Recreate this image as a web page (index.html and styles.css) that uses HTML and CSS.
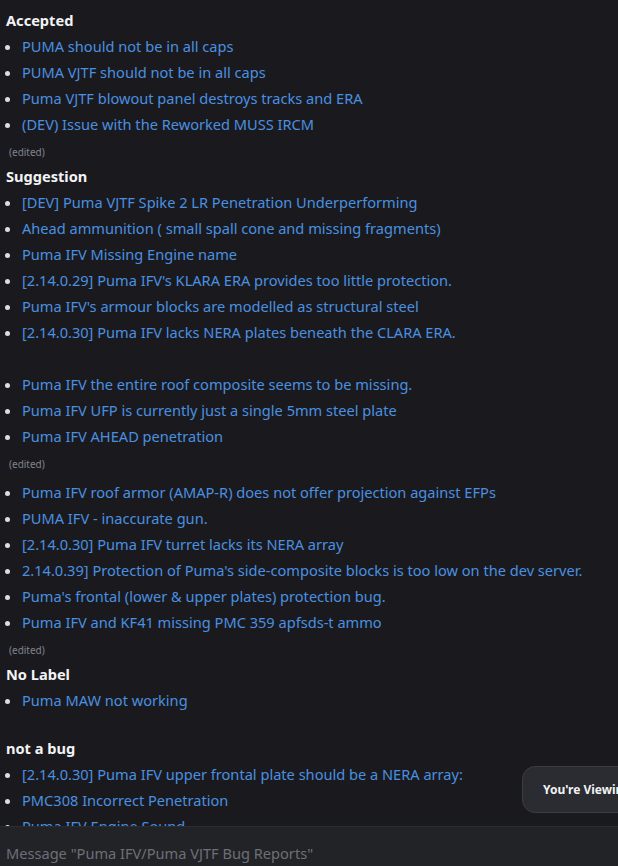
FILE: index.html
```html
<!DOCTYPE html>
<html lang="en">
<head>
    <meta charset="UTF-8">
    <meta name="viewport" content="width=device-width, initial-scale=1.0">
    <title>Puma IFV/Puma VJTF Bug Reports</title>
    <link rel="stylesheet" href="styles.css">
</head>
<body>
    <div class="chat">
        <div class="messages">
            <div class="label">Accepted</div>
            <ul class="reports">
                <li><a href="#">PUMA should not be in all caps</a></li>
                <li><a href="#">PUMA VJTF should not be in all caps</a></li>
                <li><a href="#">Puma VJTF blowout panel destroys tracks and ERA</a></li>
                <li><a href="#">(DEV) Issue with the Reworked MUSS IRCM</a></li>
            </ul>
            <div class="edited">(edited)</div>

            <div class="label">Suggestion</div>
            <ul class="reports">
                <li><a href="#">[DEV] Puma VJTF Spike 2 LR Penetration Underperforming</a></li>
                <li><a href="#">Ahead ammunition ( small spall cone and missing fragments)</a></li>
                <li><a href="#">Puma IFV Missing Engine name</a></li>
                <li><a href="#">[2.14.0.29] Puma IFV's KLARA ERA provides too little protection.</a></li>
                <li><a href="#">Puma IFV's armour blocks are modelled as structural steel</a></li>
                <li><a href="#">[2.14.0.30] Puma IFV lacks NERA plates beneath the CLARA ERA.</a></li>
            </ul>
            <div class="blank"></div>
            <ul class="reports">
                <li><a href="#">Puma IFV the entire roof composite seems to be missing.</a></li>
                <li><a href="#">Puma IFV UFP is currently just a single 5mm steel plate</a></li>
                <li><a href="#">Puma IFV AHEAD penetration</a></li>
            </ul>
            <div class="edited">(edited)</div>
            <ul class="reports after-edit">
                <li><a href="#">Puma IFV roof armor (AMAP-R) does not offer projection against EFPs</a></li>
                <li><a href="#">PUMA IFV - inaccurate gun.</a></li>
                <li><a href="#">[2.14.0.30] Puma IFV turret lacks its NERA array</a></li>
                <li><a href="#">2.14.0.39] Protection of Puma's side-composite blocks is too low on the dev server.</a></li>
                <li><a href="#">Puma's frontal (lower &amp; upper plates) protection bug.</a></li>
                <li><a href="#">Puma IFV and KF41 missing PMC 359 apfsds-t ammo</a></li>
            </ul>
            <div class="edited">(edited)</div>

            <div class="label">No Label</div>
            <ul class="reports">
                <li><a href="#">Puma MAW not working</a></li>
            </ul>
            <div class="blank short"></div>

            <div class="label">not a bug</div>
            <ul class="reports">
                <li><a href="#">[2.14.0.30] Puma IFV upper frontal plate should be a NERA array:</a></li>
                <li><a href="#">PMC308 Incorrect Penetration</a></li>
                <li><a href="#">Puma IFV Engine Sound</a></li>
            </ul>
        </div>

        <div class="toast">You're Viewing Older Messages</div>

        <div class="composer">Message "Puma IFV/Puma VJTF Bug Reports"</div>
    </div>
</body>
</html>
```

FILE: styles.css
```css
body {
    margin: 0;
    background-color: #1a1a1e;
    font-family: "Noto Sans", sans-serif;
    font-size: 14.6px;
    color: #dbdee1;
    overflow: hidden;
}
.chat {
    position: relative;
    height: 100vh;
    display: flex;
    flex-direction: column;
}
.messages {
    flex: 1;
    overflow: hidden;
    padding: 7px 0 0 6px;
}
.label {
    height: 26px;
    line-height: 26px;
    font-weight: bold;
    color: #f2f3f5;
}
.reports {
    margin: 0;
    padding-left: 16px;
    list-style: disc;
    color: #dbdee1;
}
.reports.after-edit {
    margin-top: 4px;
}
.reports li {
    height: 26px;
    line-height: 26px;
}
.reports a {
    color: #4a90e0;
    text-decoration: none;
}
.edited {
    height: 26px;
    line-height: 30px;
    font-size: 10px;
    color: #80848e;
    padding-left: 3px;
}
.blank {
    height: 26px;
}
.blank.short {
    height: 22px;
}
.toast {
    position: absolute;
    left: 522px;
    top: 766px;
    height: 45px;
    line-height: 45px;
    padding: 0 20px;
    white-space: nowrap;
    background-color: #2b2c31;
    border: 1px solid #3b3c42;
    border-radius: 13px;
    font-size: 12px;
    font-weight: bold;
    color: #f2f3f5;
}
.composer {
    height: 39px;
    line-height: 52px;
    flex-shrink: 0;
    padding-left: 6px;
    background-color: #222327;
    border-top: 1px solid #2c2d32;
    color: #6d6f78;
    font-size: 14.6px;
    overflow: hidden;
}
```
